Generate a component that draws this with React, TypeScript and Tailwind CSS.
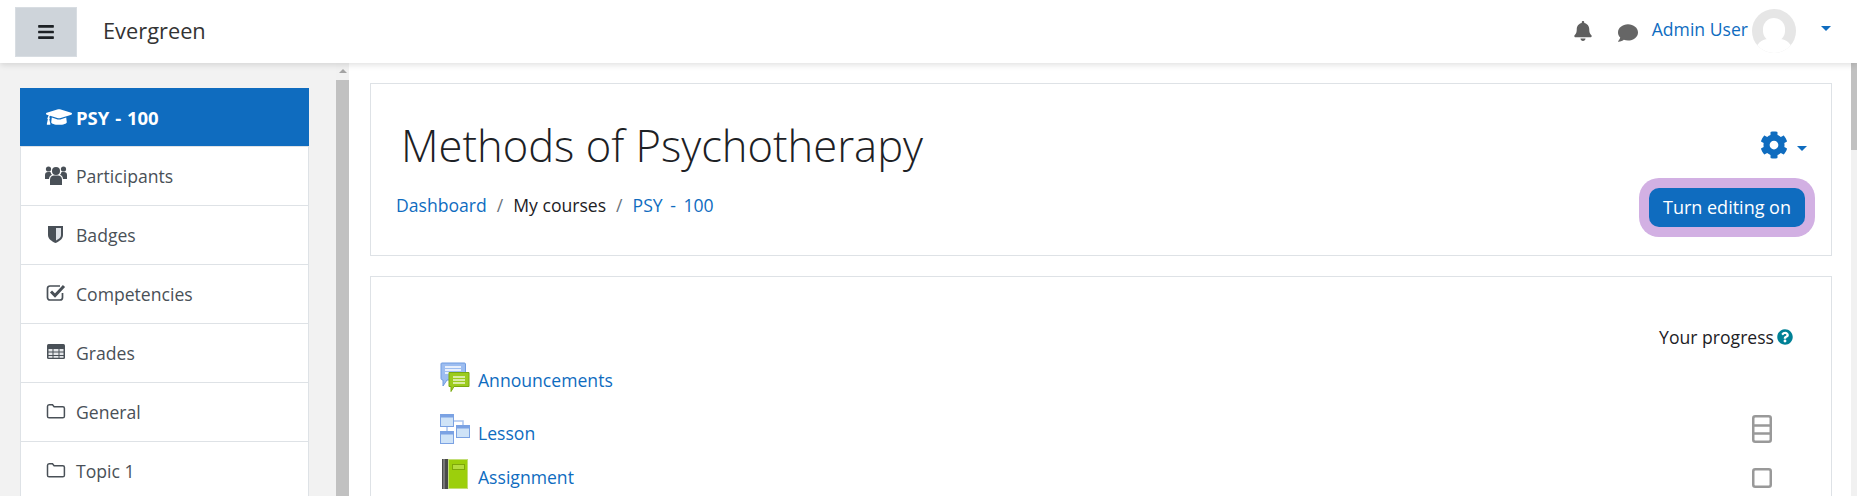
import { FaBars, FaBell, FaComment, FaCog, FaGraduationCap, FaQuestionCircle } from "react-icons/fa"
import type { ReactNode } from "react"

function NavSvg({ children }: { children: ReactNode }) {
  return <svg width="22" height="22" viewBox="0 0 22 22" fill="none">{children}</svg>
}

const FolderIcon = (
  <NavSvg>
    <path d="M2.5 6.5c0-1 .7-1.8 1.6-1.8h3.4l1.6 2h8.7c.9 0 1.6.7 1.6 1.6v7.9c0 .9-.7 1.6-1.6 1.6H4.1c-.9 0-1.6-.7-1.6-1.6z" stroke="#495057" strokeWidth="1.5" />
  </NavSvg>
)

const navItems: { label: string; icon: ReactNode }[] = [
  {
    label: "Participants",
    icon: (
      <NavSvg>
        <circle cx="11" cy="7" r="4" fill="#495057" />
        <circle cx="3.5" cy="5" r="2.6" fill="#495057" />
        <circle cx="18.5" cy="5" r="2.6" fill="#495057" />
        <path d="M5 21v-5.5C5 13 7 11.5 9 11.5h4c2 0 4 1.5 4 4V21z" fill="#495057" />
        <path d="M0 15v-4c0-2 1-3 3-3h2.5c.3 1 .6 2 1.5 2.8-2 .8-3 2.6-3 4.2z" fill="#495057" />
        <path d="M22 15v-4c0-2-1-3-3-3h-2.5c-.3 1-.6 2-1.5 2.8 2 .8 3 2.6 3 4.2z" fill="#495057" />
      </NavSvg>
    ),
  },
  {
    label: "Badges",
    icon: (
      <NavSvg>
        <path d="M3 3h15v9c0 4-4 6.500-7.500 8C7 18.500 3 16 3 12z" fill="#495057" />
        <path d="M11 5h5v7c0 2.800-3 4.500-5 5.500z" fill="#dfe3e8" />
      </NavSvg>
    ),
  },
  {
    label: "Competencies",
    icon: (
      <NavSvg>
        <path d="M17.500 11v4.500c0 1.400-1 2.500-2.500 2.500H5c-1.400 0-2.500-1-2.500-2.500V6.500C2.500 5 3.600 4 5 4h10" stroke="#495057" strokeWidth="1.700" />
        <path d="M6 9.500l4 4 9-9.500" stroke="#495057" strokeWidth="3" />
      </NavSvg>
    ),
  },
  {
    label: "Grades",
    icon: (
      <NavSvg>
        <rect x="2" y="3" width="18" height="15" rx="1.500" fill="#495057" />
        <path d="M3.500 8h4v2.500h-4zM8.500 8h5v2.500h-5zM14.500 8h4v2.500h-4zM3.500 11.500h4V14h-4zM8.500 11.500h5V14h-5zM14.500 11.500h4V14h-4zM3.500 15h4v1.800h-4zM8.500 15h5v1.800h-5zM14.500 15h4v1.800h-4z" fill="#e4e6e9" />
      </NavSvg>
    ),
  },
  { label: "General", icon: FolderIcon },
  { label: "Topic 1", icon: FolderIcon },
]

function Caret({ className }: { className: string }) {
  return <span className={`block w-0 h-0 border-x-[5px] border-x-transparent border-t-[5px] border-t-[#0f6cbf] ${className}`} />
}

function ForumIcon() {
  return (
    <svg width="30" height="30" viewBox="0 0 30 30" className="shrink-0">
      <path d="M1.500 1h23c.5 0 1 .5 1 1v16H7l-4 6v-6c-1 0-2-.5-2-1.500V2c0-.5.500-1 .500-1z" fill="#9dbdf0" stroke="#6f9be0" />
      <path d="M5 5h16M5 8h16M5 11h8" stroke="#fff" strokeWidth="1.500" />
      <path d="M9 10.500h20v14H14l-3 5v-5H9z" fill="#9ccb1e" stroke="#7aa80f" />
      <path d="M13 15h12M13 18h12M13 21h12" stroke="#eef6cf" strokeWidth="1.300" />
    </svg>
  )
}

function LessonIcon() {
  return (
    <svg width="30" height="30" viewBox="0 0 30 30" className="shrink-0">
      <path d="M7 13v4M13 7h10v5" stroke="#a9c3ee" strokeWidth="1.500" fill="none" />
      <rect x="0.500" y="0.500" width="13" height="12" fill="#cfe3f7" stroke="#7ba2e3" />
      <rect x="0.500" y="0.500" width="13" height="3" fill="#7ba2e3" />
      <rect x="16.500" y="11.500" width="13" height="12" fill="#cfe3f7" stroke="#7ba2e3" />
      <rect x="16.500" y="11.500" width="13" height="3" fill="#7ba2e3" />
      <rect x="0.500" y="17.500" width="13" height="12" fill="#cfe3f7" stroke="#7ba2e3" />
      <rect x="0.500" y="17.500" width="13" height="3" fill="#7ba2e3" />
    </svg>
  )
}

function AssignIcon() {
  return (
    <svg width="26" height="30" viewBox="0 0 26 30" className="shrink-0">
      <rect x="0" y="0" width="6" height="30" fill="#4a4a4a" />
      <rect x="1" y="0" width="2" height="30" fill="#777" />
      <rect x="6" y="0" width="20" height="30" fill="#9ccf0c" />
      <rect x="6.500" y="0.500" width="19" height="29" fill="none" stroke="#c3de78" />
      <rect x="10.500" y="5.500" width="12" height="5" fill="#b4dc3e" stroke="#7ea80a" />
    </svg>
  )
}

function CompletionBox({ lines }: { lines?: boolean }) {
  return (
    <svg width="20" height={lines ? 28 : 20} viewBox={lines ? "0 0 20 28" : "0 0 20 20"}>
      <rect x="1.250" y="1.250" width="17.500" height={lines ? 25.500 : 17.500} rx="2" fill="#fff" stroke="#999" strokeWidth="2.500" />
      {lines && <path d="M1 10.500h18M1 18.500h18" stroke="#999" strokeWidth="2.500" />}
    </svg>
  )
}

export default function App() {
  return (
    <div className="h-[496px] w-[1857px] overflow-hidden bg-white text-[17.6px] text-[#1d2125] font-['Open_Sans','Noto_Sans',sans-serif] flex flex-col">
      <header className="relative z-10 h-[63px] shrink-0 bg-white shadow-[0_2px_6px_rgba(0,0,0,0.12)] flex items-center pl-[15px] pr-[26px]">
        <button className="w-[62px] h-[50px] bg-[#ced4da] border border-[#d8dde2] flex items-center justify-center">
          <FaBars className="text-[18px] text-[#1d2125]" />
        </button>
        <span className="ml-[26px] text-[21.800px] text-[#333]">Evergreen</span>
        <div className="ml-auto flex items-center">
          <FaBell className="-mt-[2px] text-[20px] text-[#5f5f5f]" />
          <FaComment className="ml-[25px] mt-[2px] text-[20px] text-[#666]" />
          <span className="ml-[14px] text-[#0f6cbf] -mt-[4px]">Admin User</span>
          <div className="ml-[4px] w-[44px] h-[44px] rounded-full bg-[#e6e6e6] overflow-hidden flex flex-col items-center pt-[9px] -mt-[2px]">
            <span className="block w-[22px] h-[24px] rounded-full bg-white shrink-0" />
            <span className="block w-[36px] h-[24px] rounded-full bg-white shrink-0 -mt-[3px]" />
          </div>
          <Caret className="ml-[25px] -mt-[6px]" />
        </div>
      </header>

      <div className="flex flex-1 min-h-0">
        <aside className="w-[336px] shrink-0 bg-[#f2f2f2] pl-[20px] pr-[27px] pt-[25px]">
          <div className="h-[58px] bg-[#0f6cbf] text-white font-bold flex items-center pl-[26px]">
            <FaGraduationCap className="text-[26px] shrink-0" />
            <span className="ml-[4px] mt-[2px] text-[18.500px] [word-spacing:1px]">PSY - 100</span>
          </div>
          <ul className="border-x border-t border-[#dee2e6] bg-white">
            {navItems.map(({ label, icon }) => (
              <li key={label} className="h-[59px] border-b border-[#dee2e6] flex items-center pl-[24px] text-[#495057]">
                <span className="w-[31px] shrink-0 flex -mt-[2px]">{icon}</span>
                <span className="mt-[1px]">{label}</span>
              </li>
            ))}
          </ul>
        </aside>

        <div className="w-[13px] shrink-0 bg-[#f1f1f1] flex flex-col items-center">
          <span className="block mt-[6px] w-0 h-0 border-x-[4px] border-x-transparent border-b-[4px] border-b-[#a3a3a3]" />
          <div className="mt-[7px] flex-1 w-full bg-[#c1c1c1]" />
        </div>

        <main className="flex-1 min-w-0 pl-[21px] pr-[19px] pt-[20px] flex flex-col gap-[20px]">
          <section className="h-[173px] shrink-0 border border-[#dee2e6] bg-white flex justify-between">
            <div className="pl-[25px] pt-[31px]">
              <h1 className="ml-[5px] text-[43.500px] leading-[62px] font-light text-[#1d2125]">Methods of Psychotherapy</h1>
              <nav className="mt-[15px] flex items-center">
                <span className="text-[#0f6cbf]">Dashboard</span>
                <span className="mx-[10px] text-[#6a737b]">/</span>
                <span>My courses</span>
                <span className="mx-[10px] text-[#6a737b]">/</span>
                <span className="text-[#0f6cbf] [word-spacing:3px]">PSY - 100</span>
              </nav>
            </div>
            <div className="pr-[26px] pt-[47px] flex flex-col items-end">
              <div className="flex items-center mr-[-2px]">
                <FaCog className="text-[28px] text-[#0f6cbf]" />
                <Caret className="ml-[9px] mt-[6px]" />
              </div>
              <button className="mt-[29px] h-[39px] w-[156px] rounded-[10px] bg-[#0f6cbf] text-[18px] text-white ring-[10px] ring-[#d2b0e3] whitespace-nowrap">
                Turn editing on
              </button>
            </div>
          </section>

          <section className="flex-1 min-h-0 border border-[#dee2e6] border-b-0 bg-white px-[69px]">
            <div className="mt-[47px] flex justify-end items-center mr-[-31px]">
              <span>Your progress</span>
              <FaQuestionCircle className="ml-[3px] text-[16px] text-[#008196]" />
            </div>
            <div className="mt-[12px] flex items-center h-[30px]">
              <ForumIcon />
              <span className="ml-[8px] mt-[6px] text-[#0f6cbf]">Announcements</span>
            </div>
            <div className="mt-[22px] flex items-center h-[30px]">
              <LessonIcon />
              <span className="ml-[8px] mt-[7px] text-[#0f6cbf]">Lesson</span>
              <span className="ml-auto flex mr-[-10px]"><CompletionBox lines /></span>
            </div>
            <div className="mt-[15px] flex items-center h-[30px]">
              <span className="ml-[2px] flex"><AssignIcon /></span>
              <span className="ml-[10px] mt-[6px] text-[#0f6cbf]">Assignment</span>
              <span className="ml-auto flex mr-[-10px] mt-[8px]"><CompletionBox /></span>
            </div>
          </section>
        </main>

        <div className="w-[6px] shrink-0 bg-[#f1f1f1] flex flex-col">
          <div className="h-[87px] bg-[#c1c1c1]" />
        </div>
      </div>
    </div>
  )
}
